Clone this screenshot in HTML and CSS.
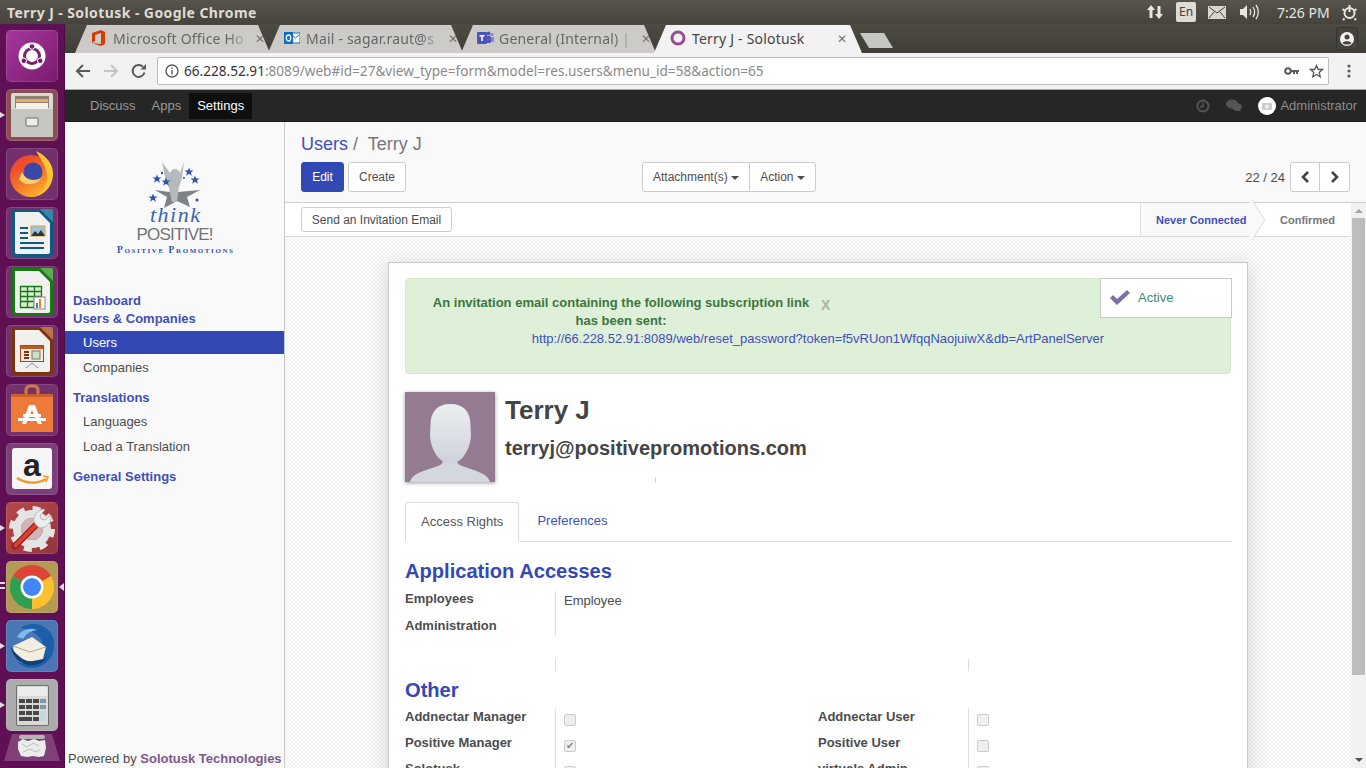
FILE: index.html
```html
<!DOCTYPE html>
<html>
<head>
    <title>Terry J - Solotusk</title>
    <link rel="stylesheet" href="styles.css">
</head>
<body>
    <div class="topbar">
        <span class="win-title">Terry J - Solotusk - Google Chrome</span>
        <div class="tray">
            <svg class="tray-arrows" width="18" height="16" viewBox="0 0 18 16"><path d="M5 1l4 5H6.500v8h-3V6H1zM13 15l-4-5h2.500V2h3v8H17z" fill="#e8e6e0"/></svg>
            <span class="tray-lang">En</span>
            <svg class="tray-mail" width="18" height="13" viewBox="0 0 18 13"><rect x="0.500" y="0.500" width="17" height="12" fill="#d8d6d0" stroke="#d8d6d0"/><path d="M1 1l8 6 8-6M1 12l5.500-6.500M17 12l-5.500-6.500" fill="none" stroke="#45433c"/></svg>
            <svg class="tray-sound" width="22" height="16" viewBox="0 0 22 16"><path d="M1 5h3l4-4v14l-4-4H1z" fill="#e8e6e0"/><path d="M11 5c1 2 1 4 0 6M14 3c2 3 2 7 0 10M17 1c3 4 3 10 0 14" fill="none" stroke="#e8e6e0" stroke-width="1.300"/></svg>
            <span class="tray-clock">7:26 PM</span>
            <svg class="tray-gear" width="17" height="17" viewBox="0 0 17 17"><circle cx="8.500" cy="9" r="5" fill="none" stroke="#e8e6e0" stroke-width="2"/><path d="M8.500 1v7M1.500 5l2 1.500M15.500 5l-2 1.500M3.500 14.500l-1.500 1.500M13.500 14.500l1.500 1.500" stroke="#e8e6e0" stroke-width="2"/></svg>
        </div>
    </div>

    <div class="desktop">
        <div class="launcher">
            <div class="tile tile-ubuntu">
                <svg width="52" height="52" viewBox="0 0 52 52"><circle cx="26" cy="26" r="13.500" fill="#fff"/><circle cx="26" cy="26" r="7.500" fill="none" stroke="#7a1e70" stroke-width="3"/><circle cx="26" cy="16.500" r="2.800" fill="#7a1e70" stroke="#fff"/><circle cx="17.800" cy="30.800" r="2.800" fill="#7a1e70" stroke="#fff"/><circle cx="34.200" cy="30.800" r="2.800" fill="#7a1e70" stroke="#fff"/></svg>
            </div>
            <div class="tile tile-files has-pip">
                <svg width="52" height="52" viewBox="0 0 52 52"><rect x="5" y="4" width="42" height="44" rx="2" fill="#d9d9d6"/><rect x="9" y="7" width="34" height="12" fill="#8c7f74"/><rect x="10" y="10" width="32" height="3" fill="#f0a860"/><rect x="10" y="14" width="32" height="6" fill="#f4f0e8"/><rect x="5" y="20" width="42" height="28" fill="#c6c6c3"/><rect x="20" y="29" width="12" height="8" rx="1" fill="#eee" stroke="#666"/></svg>
            </div>
            <div class="tile tile-app">
                <svg width="52" height="52" viewBox="0 0 52 52"><defs><linearGradient id="foxBody" x1="0" y1="0" x2="0.600" y2="1"><stop offset="0" stop-color="#e8352a"/><stop offset="0.600" stop-color="#f4702a"/><stop offset="1" stop-color="#fbb02d"/></linearGradient></defs><circle cx="25" cy="28" r="21" fill="url(#foxBody)"/><path d="M30 3c11 5 18 14 17 25-1 10-8 18-17 20 8-5 12-12 11-21-1-9-6-15-11-24z" fill="#fcc42f"/><circle cx="27" cy="24" r="9.500" fill="#3a47a8"/><path d="M16 24c3 8 12 10 19 6-4 7-17 9-22 1z" fill="#fbd06a"/><path d="M8 17c4-3 10-4 15-1-5 1-6 5-4 8-5 0-9-2-11-7z" fill="#ee4f2a"/></svg>
            </div>
            <div class="tile tile-app">
                <svg width="52" height="52" viewBox="0 0 52 52"><path d="M6 2h28l13 13v31a4 4 0 0 1-4 4H10a4 4 0 0 1-4-4z" fill="#0f5a85"/><path d="M9 5h24l11 11v29a2 2 0 0 1-2 2H11a2 2 0 0 1-2-2z" fill="#f0f0ee"/><path d="M34 2h11a2 2 0 0 1 2 2v11z" fill="#3d84ad"/><path d="M14 20h8v2h-8zM14 25h8v2h-8zM14 30h8v2h-8zM14 35h24v2H14zM14 40h24v2H14z" fill="#0f5a85"/><rect x="25" y="19" width="14" height="10" fill="#9cc3de" stroke="#d9a441"/><path d="M25 29l4-5 3 3 3-4 4 6z" fill="#333"/></svg>
            </div>
            <div class="tile tile-app">
                <svg width="52" height="52" viewBox="0 0 52 52"><path d="M6 2h28l13 13v31a4 4 0 0 1-4 4H10a4 4 0 0 1-4-4z" fill="#157a12"/><path d="M9 5h24l11 11v29a2 2 0 0 1-2 2H11a2 2 0 0 1-2-2z" fill="#f0f0ee"/><path d="M34 2h11a2 2 0 0 1 2 2v11z" fill="#57b04a"/><path d="M14.500 20.500h21v21h-21zM14.500 25.500h21M14.500 30.500h21M14.500 35.500h21M21.500 20.500v21M28.500 20.500v21" fill="#d8edd0" stroke="#157a12" stroke-width="1.300"/><rect x="28" y="31" width="11" height="12" fill="#fff" stroke="#888"/><path d="M30 37h2v5h-2z" fill="#3d84ad"/><path d="M33 33h2v9h-2z" fill="#e8842a"/></svg>
            </div>
            <div class="tile tile-app">
                <svg width="52" height="52" viewBox="0 0 52 52"><path d="M6 2h28l13 13v31a4 4 0 0 1-4 4H10a4 4 0 0 1-4-4z" fill="#7a3510"/><path d="M9 5h24l11 11v29a2 2 0 0 1-2 2H11a2 2 0 0 1-2-2z" fill="#f0f0ee"/><path d="M34 2h11a2 2 0 0 1 2 2v11z" fill="#b8764a"/><rect x="14.500" y="20.500" width="23" height="16" fill="#f6e9dd" stroke="#a8481a"/><rect x="15" y="21" width="22" height="3" fill="#c05a20"/><path d="M18 26h5v2h-5zM18 29h5v2h-5zM18 32h5v2h-5z" fill="#7a3510"/><rect x="26" y="26" width="8" height="8" fill="#cfe0c8" stroke="#777"/><path d="M20 43l6-5 6 5" fill="none" stroke="#888"/></svg>
            </div>
            <div class="tile tile-app">
                <svg width="52" height="52" viewBox="0 0 52 52"><path d="M20 12V6a4 4 0 0 1 4-4h4a4 4 0 0 1 4 4v6" fill="none" stroke="#d97a44" stroke-width="3"/><rect x="5" y="10" width="42" height="38" fill="#ed7a38"/><rect x="5" y="10" width="42" height="3" fill="#c8622a"/><path d="M23 21h6l7 19h-4l-6-14-6 14h-4z" fill="#fff"/><rect x="17" y="30" width="18" height="3" fill="#fff"/><rect x="12" y="34" width="28" height="3" fill="#fff"/></svg>
            </div>
            <div class="tile tile-amazon">
                <svg width="52" height="52" viewBox="0 0 52 52"><rect x="6" y="5" width="40" height="41" rx="3" fill="#f6f6f6"/><text class="amazon-a" x="26" y="33" text-anchor="middle">a</text><path d="M11 35c9 6 21 6 29 1" fill="none" stroke="#f39a1e" stroke-width="2.500"/><path d="M37 33l5 1-2 5" fill="none" stroke="#f39a1e" stroke-width="1.500"/></svg>
            </div>
            <div class="tile tile-settings has-pip">
                <svg width="52" height="52" viewBox="0 0 52 52"><circle cx="26" cy="27" r="15" fill="none" stroke="#e4e4e4" stroke-width="8"/><circle cx="26" cy="27" r="20.500" fill="none" stroke="#e4e4e4" stroke-width="5" stroke-dasharray="8 8.100"/><circle cx="26" cy="27" r="11" fill="#d0b5b5"/><path d="M9 44l24-24" stroke="#8e1f1a" stroke-width="6.500" stroke-linecap="round"/><path d="M9.500 43.500l23-23" stroke="#d8402f" stroke-width="4" stroke-linecap="round"/><path d="M31 24l-3-4c-1-6 3-12 10-13l1 1-5 5 1 4 4 1 6-5c1 7-4 13-11 13z" fill="#ececec" stroke="#9a9a9a" stroke-width="0.600"/></svg>
            </div>
            <div class="tile tile-chrome has-pip two-pips active-app">
                <svg width="52" height="52" viewBox="0 0 52 52"><path d="M26 26L6.950 15A22 22 0 0 1 45.050 15Z" fill="#db4437"/><path d="M26 26L45.050 15A22 22 0 0 1 26 48Z" fill="#fbc02d"/><path d="M26 26L26 48A22 22 0 0 1 6.950 15Z" fill="#2f9e4f"/><circle cx="26" cy="26" r="11.500" fill="#fff"/><circle cx="26" cy="26" r="9" fill="#4285f4"/></svg>
            </div>
            <div class="tile tile-bird has-pip">
                <svg width="52" height="52" viewBox="0 0 52 52"><path d="M14 8c12-8 28-4 33 9 4 12-2 26-15 30-8 2-16 0-21-5 10 3 24-2 26-14 1-9-8-18-23-20z" fill="#1d5ea8"/><path d="M11 17c4-7 13-10 20-7-7 1-11 4-14 9z" fill="#7dbcec"/><path d="M7 26l19-9 14 10-3 12-21 4-8-8z" fill="#f3eee0"/><path d="M7 26l17 6 16-5" fill="none" stroke="#b0a890"/><path d="M5 27c1 9 8 16 17 18 9 1 15-2 19-8-8 6-22 6-28-1-4-3-6-6-8-9z" fill="#123f7a"/></svg>
            </div>
            <div class="tile tile-calc has-pip">
                <svg width="52" height="52" viewBox="0 0 52 52"><rect x="10" y="6" width="33" height="41" rx="2" fill="#6e6e6e"/><rect x="11" y="7" width="31" height="39" rx="1" fill="#d9d9d9"/><rect x="12" y="8" width="29" height="9" fill="#ececec"/><g fill="#484848"><rect x="13" y="20" width="6" height="4"/><rect x="20" y="20" width="6" height="4"/><rect x="27" y="20" width="6" height="4"/><rect x="13" y="26" width="6" height="4"/><rect x="20" y="26" width="6" height="4"/><rect x="27" y="26" width="6" height="4"/><rect x="13" y="32" width="6" height="4"/><rect x="20" y="32" width="6" height="4"/><rect x="27" y="32" width="6" height="4"/><rect x="13" y="38" width="13" height="4"/><rect x="27" y="38" width="6" height="4"/></g><rect x="34" y="20" width="6" height="4" fill="#7c97a8"/><rect x="34" y="26" width="6" height="4" fill="#7c97a8"/><rect x="34" y="32" width="6" height="10" fill="#c4d6e0"/></svg>
            </div>
            <div class="tile-trash">
                <svg width="58" height="30" viewBox="0 0 58 30"><path d="M9 1h40l8 27H1z" fill="#81407a"/><rect x="16" y="2" width="26" height="4" rx="2" fill="#b5b5b5"/><path d="M15 9l5-3 5 2 6-2 5 2 6-1 1 8-2 8-5 1-6-1-6 1-6-1-3-7z" fill="#ececec"/><path d="M19 11l5 3 6-4 6 3M20 19l7-3 6 3 4-2" fill="none" stroke="#bbb"/></svg>
            </div>
        </div>

        <div class="browser">
            <div class="tabstrip">
                <div class="tab">
                    <svg class="favicon" width="16" height="16" viewBox="0 0 16 16"><path d="M1 3l9-3 4 2v12l-4 2-9-3 9 1V3L4 5v6l-3 2z" fill="#d83b01"/></svg>
                    <span class="tab-name">Microsoft Office Ho</span>
                    <span class="tab-x">✕</span>
                </div>
                <div class="tab">
                    <svg class="favicon" width="16" height="16" viewBox="0 0 16 16"><rect x="7" y="3" width="9" height="10" fill="#fff" stroke="#0f6fc6"/><path d="M8 5l3.500 3L15 5" fill="none" stroke="#0f6fc6"/><rect y="2" width="9" height="12" fill="#0f6fc6"/><ellipse cx="4.500" cy="8" rx="2.200" ry="3" fill="none" stroke="#fff" stroke-width="1.300"/></svg>
                    <span class="tab-name">Mail - sagar.raut@s</span>
                    <span class="tab-x">✕</span>
                </div>
                <div class="tab">
                    <svg class="favicon" width="17" height="16" viewBox="0 0 17 16"><circle cx="11.500" cy="3.500" r="2" fill="#5558af"/><circle cx="15" cy="4.500" r="1.500" fill="#7b83eb"/><rect x="9" y="6" width="5" height="7" rx="1" fill="#5558af"/><rect x="14" y="7" width="3" height="5" rx="1" fill="#7b83eb"/><rect y="2" width="10" height="12" rx="1" fill="#4b53bc"/><path d="M2.500 5h5v1.500H5.800V11H4.200V6.500H2.500z" fill="#fff"/></svg>
                    <span class="tab-name tab-name-teams">General (Internal) | I</span>
                    <span class="tab-x">✕</span>
                </div>
                <div class="tab tab-active">
                    <svg class="favicon" width="16" height="16" viewBox="0 0 16 16"><circle cx="8" cy="8" r="6" fill="none" stroke="#964c8d" stroke-width="3"/></svg>
                    <span class="tab-name">Terry J - Solotusk</span>
                    <span class="tab-x">✕</span>
                </div>
                <div class="tab-new"></div>
                <div class="profile-btn">
                    <svg width="16" height="16" viewBox="0 0 16 16"><circle cx="8" cy="8" r="7" fill="#f2f2f2"/><circle cx="8" cy="6" r="2.500" fill="#45433c"/><path d="M3.500 12c1-2.500 8-2.500 9 0-2 2-7 2-9 0z" fill="#45433c"/></svg>
                </div>
            </div>

            <div class="toolbar">
                <svg class="tool-back" width="16" height="16" viewBox="0 0 16 16"><path d="M15 8H2M8 2L2 8l6 6" fill="none" stroke="#5a5a5a" stroke-width="2"/></svg>
                <svg class="tool-forward" width="16" height="16" viewBox="0 0 16 16"><path d="M1 8h13M8 2l6 6-6 6" fill="none" stroke="#c4c4c4" stroke-width="2"/></svg>
                <svg class="tool-reload" width="16" height="16" viewBox="0 0 16 16"><path d="M13.500 9.500A6 6 0 1 1 12 3.700" fill="none" stroke="#5a5a5a" stroke-width="2"/><path d="M9.500 6.500H15V1z" fill="#5a5a5a"/></svg>
                <div class="omnibox">
                    <svg class="omni-info" width="14" height="14" viewBox="0 0 14 14"><circle cx="7" cy="7" r="6" fill="none" stroke="#5a5a5a" stroke-width="1.400"/><path d="M6.300 6h1.400v4.500H6.300zM6.300 3.500h1.400V5H6.300z" fill="#5a5a5a"/></svg>
                    <span class="url"><b class="url-host">66.228.52.91</b>:8089/web#id=27&amp;view_type=form&amp;model=res.users&amp;menu_id=58&amp;action=65</span>
                    <svg class="omni-key" width="15" height="9" viewBox="0 0 15 9"><circle cx="4" cy="4" r="2.800" fill="none" stroke="#5a5a5a" stroke-width="2"/><path d="M7 3h8v2h-1v2h-2V5h-1v2H9V5H7z" fill="#5a5a5a"/></svg>
                    <svg class="omni-star" width="15" height="15" viewBox="0 0 15 15"><path d="M7.500 1.500l1.800 4h4.200l-3.300 2.900 1.100 4.400-3.800-2.400-3.800 2.400 1.100-4.400L1.500 5.500h4.200z" fill="none" stroke="#5a5a5a" stroke-width="1.300"/></svg>
                </div>
                <svg class="tool-menu" width="4" height="14" viewBox="0 0 4 14"><circle cx="2" cy="2" r="1.600" fill="#5a5a5a"/><circle cx="2" cy="7" r="1.600" fill="#5a5a5a"/><circle cx="2" cy="12" r="1.600" fill="#5a5a5a"/></svg>
            </div>

            <div class="o-nav">
                <a class="o-nav-item">Discuss</a>
                <a class="o-nav-item">Apps</a>
                <a class="o-nav-item o-nav-active">Settings</a>
                <div class="o-nav-right">
                    <svg class="o-clock" width="14" height="14" viewBox="0 0 14 14"><circle cx="7" cy="7" r="5.500" fill="none" stroke="#555" stroke-width="2"/><path d="M7 3.500V7.500H4" fill="none" stroke="#555" stroke-width="1.500"/></svg>
                    <svg class="o-chat" width="16" height="13" viewBox="0 0 16 13"><ellipse cx="6" cy="5" rx="6" ry="4.500" fill="#555"/><ellipse cx="11" cy="8" rx="5" ry="4" fill="#555"/><path d="M13 10l2 3-4-2z" fill="#555"/></svg>
                    <span class="o-avatar"><svg width="10" height="8" viewBox="0 0 10 8"><rect y="1" width="10" height="7" rx="1" fill="#ccc"/><circle cx="5" cy="4.500" r="2" fill="#eee"/></svg></span>
                    <span class="o-user">Administrator</span>
                </div>
            </div>

            <div class="o-main">
                <div class="sidebar">
                    <div class="logo">
                        <svg width="120" height="98" viewBox="0 0 120 98">
                            <defs><path id="logoStar" d="M0-4.500l1.200 3h3.300l-2.600 2 1 3.200L0 1.800l-2.900 1.900 1-3.200-2.600-2h3.300z" fill="#3153a8"/></defs>
                            <path d="M40 31l14 2 4-4 5 4 22-2-13 7 3 10-13-6-13 7 3-11z" fill="#7d8287"/>
                            <path d="M47 3l8 11c1-2 2-4 5-4s4 2 5 4l4-11-2 16-3 9-2 15h-5l-3-14-4-11z" fill="#b6babd"/>
                            <use href="#logoStar" x="42" y="20"/>
                            <use href="#logoStar" x="51" y="23"/>
                            <use href="#logoStar" x="74" y="13"/>
                            <use href="#logoStar" x="80" y="21"/>
                            <use href="#logoStar" x="38" y="39"/>
                            <circle cx="47" cy="14" r="1.200" fill="#3153a8"/>
                            <circle cx="69" cy="19" r="1" fill="#3153a8"/>
                            <circle cx="82" cy="41" r="1.600" fill="#3153a8"/>
                            <text class="logo-think" x="60" y="63" text-anchor="middle" textLength="50">think</text>
                            <text class="logo-positive" x="60" y="81" text-anchor="middle" textLength="77">POSITIVE!</text>
                            <text class="logo-promo" x="60" y="94" text-anchor="middle" textLength="116">Positive Promotions</text>
                        </svg>
                    </div>
                    <div class="menu">
                        <a class="menu-head">Dashboard</a>
                        <a class="menu-head menu-open">Users &amp; Companies</a>
                        <a class="menu-item menu-active">Users</a>
                        <a class="menu-item">Companies</a>
                        <a class="menu-head menu-gap">Translations</a>
                        <a class="menu-item">Languages</a>
                        <a class="menu-item">Load a Translation</a>
                        <a class="menu-head menu-gap">General Settings</a>
                    </div>
                    <div class="powered">Powered by <b>Solotusk Technologies</b></div>
                </div>

                <div class="content">
                    <div class="control-panel">
                        <div class="crumbs"><a class="crumb-link">Users</a> /&nbsp; <span class="crumb-cur">Terry J</span></div>
                        <div class="cp-buttons">
                            <div class="cp-left">
                                <button class="btn btn-primary btn-edit">Edit</button>
                                <button class="btn btn-create">Create</button>
                            </div>
                            <div class="cp-mid">
                                <button class="btn btn-group-l">Attachment(s) <i class="caret"></i></button>
                                <button class="btn btn-group-r">Action <i class="caret"></i></button>
                            </div>
                            <div class="cp-right">
                                <span class="pager">22 / 24</span>
                                <button class="btn btn-group-l btn-page"><svg width="10" height="12" viewBox="0 0 10 12"><path d="M8 1L3 6l5 5" fill="none" stroke="#444" stroke-width="2.600"/></svg></button>
                                <button class="btn btn-group-r btn-page"><svg width="10" height="12" viewBox="0 0 10 12"><path d="M2 1l5 5-5 5" fill="none" stroke="#444" stroke-width="2.600"/></svg></button>
                            </div>
                        </div>
                    </div>

                    <div class="form-wrap">
                        <div class="form-col">
                            <div class="statusbar">
                                <button class="btn btn-invite">Send an Invitation Email</button>
                                <div class="stages">
                                    <span class="stage stage-on"><span>Never Connected</span></span>
                                    <span class="stage">Confirmed</span>
                                </div>
                            </div>
                            <div class="sheet-bg">
                                <div class="sheet">
                                    <div class="alert">
                                        <div class="alert-top">
                                            <p class="alert-msg">An invitation email containing the following subscription link has been sent:</p>
                                            <span class="alert-x">X</span>
                                        </div>
                                        <a class="alert-link">http://66.228.52.91:8089/web/reset_password?token=f5vRUon1WfqqNaojuiwX&amp;db=ArtPanelServer</a>
                                    </div>
                                    <div class="active-btn">
                                        <svg width="22" height="17" viewBox="0 0 22 17"><path d="M1 9l3-3 4 4L18 1l3 3L8 16z" fill="#7c6fa8"/></svg>
                                        <span>Active</span>
                                    </div>

                                    <div class="user-head">
                                        <div class="avatar">
                                            <svg width="90" height="90" viewBox="0 0 90 90">
                                                <defs>
                                                    <linearGradient id="headFill" x1="0" y1="0" x2="0" y2="1"><stop offset="0" stop-color="#eceef1"/><stop offset="1" stop-color="#ced1d9"/></linearGradient>
                                                </defs>
                                                <rect width="90" height="90" fill="#937b92"/>
                                                <path d="M5 90C7 81 22 78 33 74c5-2 5-4 5-8h14c0 4 0 6 5 8 11 4 26 7 28 16z" fill="#d4d7de"/>
                                                <path d="M45.500 12C32 12 25.500 20 25.500 33c0 5-1 9 0 15 2 13 11 24 20 24s18-11 20-24c1-6 0-10 0-15 0-13-6.500-21-20-21z" fill="url(#headFill)"/>
                                            </svg>
                                        </div>
                                        <div class="user-text">
                                            <h1 class="user-name">Terry J</h1>
                                            <h2 class="user-mail">terryj@positivepromotions.com</h2>
                                            <i class="tick"></i>
                                        </div>
                                    </div>

                                    <div class="tabs">
                                        <a class="form-tab form-tab-on">Access Rights</a>
                                        <a class="form-tab">Preferences</a>
                                    </div>

                                    <h3 class="group-title">Application Accesses</h3>
                                    <div class="grid-access">
                                        <div class="g-label">Employees</div>
                                        <div class="g-val g-text">Employee</div>
                                        <div class="g-label">Administration</div>
                                        <div class="g-val"></div>
                                    </div>
                                    <div class="grid-other grid-stub">
                                        <div></div><div class="g-val"></div><div></div><div class="g-val"></div>
                                    </div>

                                    <h3 class="group-title group-other">Other</h3>
                                    <div class="grid-other">
                                        <div class="g-label">Addnectar Manager</div>
                                        <div class="g-val"><i class="check"></i></div>
                                        <div class="g-label">Addnectar User</div>
                                        <div class="g-val"><i class="check"></i></div>
                                        <div class="g-label">Positive Manager</div>
                                        <div class="g-val"><i class="check">✔</i></div>
                                        <div class="g-label">Positive User</div>
                                        <div class="g-val"><i class="check"></i></div>
                                        <div class="g-label">Solotusk</div>
                                        <div class="g-val"><i class="check"></i></div>
                                        <div class="g-label">virtuals Admin</div>
                                        <div class="g-val"><i class="check"></i></div>
                                    </div>
                                </div>
                            </div>
                        </div>
                        <div class="scrollbar">
                            <i class="sb-up"></i>
                            <div class="sb-track"><div class="sb-thumb"></div></div>
                            <i class="sb-down"></i>
                        </div>
                    </div>
                </div>
            </div>
        </div>
    </div>
</body>
</html>
```

FILE: styles.css
```css
* {
    box-sizing: border-box;
}
html, body {
    height: 100%;
}
body {
    margin: 0;
    height: 768px;
    overflow: hidden;
    display: flex;
    flex-direction: column;
    font-family: "Liberation Sans", Arial, sans-serif;
    font-size: 13px;
    color: #4c4c4c;
}
a {
    cursor: pointer;
}
button {
    font-family: inherit;
}

/* ubuntu top panel */
.topbar {
    height: 24px;
    flex: none;
    display: flex;
    align-items: center;
    justify-content: space-between;
    background: linear-gradient(#56544b, #45433c);
    padding: 0 8px 0 7px;
}
.win-title {
    font-family: "Noto Sans", sans-serif;
    font-weight: 700;
    font-size: 14px;
    letter-spacing: 0.42px;
    color: #dfdbd2;
}
.tray {
    display: flex;
    align-items: center;
    color: #e8e6e0;
}
.tray-lang {
    width: 20px;
    height: 20px;
    margin-left: 12px;
    background: #dfdcd5;
    border-radius: 2px;
    color: #45433c;
    font-family: "Noto Sans", sans-serif;
    font-size: 12px;
    line-height: 20px;
    text-align: center;
}
.tray-mail {
    margin-left: 12px;
}
.tray-sound {
    margin-left: 13px;
}
.tray-clock {
    margin-left: 16px;
    font-family: "Noto Sans", sans-serif;
    font-size: 14px;
    width: 52px;
    white-space: nowrap;
}
.tray-gear {
    margin-left: 12px;
}

.desktop {
    flex: 1;
    display: flex;
    min-height: 0;
}

/* launcher */
.launcher {
    width: 65px;
    flex: none;
    background: #5f0f53;
    display: flex;
    flex-direction: column;
    align-items: center;
    gap: 7px;
    padding-top: 6px;
    border-right: 1px solid #4a0c41;
}
.tile {
    width: 52px;
    height: 52px;
    flex: none;
    border-radius: 5px;
    position: relative;
    background: #72306c;
    box-shadow: inset 0 0 0 1px rgba(255, 255, 255, 0.12);
}
.tile svg {
    display: block;
}
.tile-ubuntu {
    background: linear-gradient(135deg, #a5389b, #7a1a70);
}
.tile-files {
    background: #8a4f55;
}
.tile-amazon {
    background: #7d3f79;
}
.tile-settings {
    background: linear-gradient(135deg, #b8474a, #96343c);
}
.tile-chrome {
    background: #b39a55;
}
.tile-bird {
    background: #4a76b4;
}
.tile-calc {
    background: #acacac;
}
.tile-trash {
    height: 30px;
    margin-top: -5px;
}
.tile-trash svg {
    display: block;
}
.has-pip::before {
    content: "";
    position: absolute;
    left: -6px;
    top: 23px;
    border-left: 5px solid #ddd;
    border-top: 3.5px solid transparent;
    border-bottom: 3.5px solid transparent;
}
.two-pips::before {
    top: 21px;
    height: 0;
    box-shadow: 0 5px 0 #ddd;
    border: 0;
    width: 5px;
    border-top: 2px solid #ddd;
}
.active-app::after {
    content: "";
    position: absolute;
    right: -6px;
    top: 22px;
    border-right: 5px solid #ddd;
    border-top: 4px solid transparent;
    border-bottom: 4px solid transparent;
}
.amazon-a {
    font-family: "Liberation Sans", sans-serif;
    font-weight: 700;
    font-size: 32px;
    fill: #222;
}

.browser {
    flex: 1;
    min-width: 0;
    display: flex;
    flex-direction: column;
}

/* chrome tabs */
.tabstrip {
    height: 29px;
    flex: none;
    display: flex;
    align-items: flex-end;
    background: linear-gradient(#4d4b43, #3f3e37);
    padding-left: 10px;
    position: relative;
}
.tab {
    width: 195px;
    height: 28px;
    margin-right: -2px;
    padding: 0 5px 2px 16px;
    display: flex;
    align-items: center;
    background: #cdcbc8;
    clip-path: polygon(12px 0, calc(100% - 12px) 0, 100% 100%, 0 100%);
    font-family: "Noto Sans", sans-serif;
    font-size: 14px;
    color: #666;
}
.tab-active {
    width: 208px;
    padding-right: 15px;
    background: #f2f2f2;
    color: #444;
    z-index: 1;
}
.favicon {
    flex: none;
    margin-right: 6px;
}
.tab-name {
    flex: 1;
    min-width: 0;
    white-space: nowrap;
    letter-spacing: 0.2px;
    -webkit-mask-image: linear-gradient(90deg, #000 85%, transparent);
    mask-image: linear-gradient(90deg, #000 85%, transparent);
}
.tab-name-teams {
    margin-left: -1px;
}
.tab-active .tab-name {
    -webkit-mask-image: none;
    mask-image: none;
}
.tab-x {
    flex: none;
    margin-left: 6px;
    font-size: 12px;
    color: #777;
}
.tab-new {
    width: 33px;
    height: 15px;
    margin: 0 0 5px 0;
    background: #c8c6c3;
    clip-path: polygon(0 0, 24px 0, 100% 100%, 9px 100%);
}
.profile-btn {
    position: absolute;
    right: 8px;
    top: 3px;
    width: 22px;
    height: 23px;
    border: 1px solid #35342e;
    border-radius: 3px;
    background: #45433c;
    display: flex;
    align-items: center;
    justify-content: center;
}

/* chrome toolbar */
.toolbar {
    height: 37px;
    flex: none;
    display: flex;
    align-items: center;
    background: #f2f2f2;
    padding: 0 0 0 10px;
    border-bottom: 1px solid #a8a8a8;
}
.tool-forward {
    margin-left: 12px;
}
.tool-reload {
    margin-left: 12px;
}
.omnibox {
    width: 1172px;
    height: 28px;
    margin-left: 10px;
    display: flex;
    align-items: center;
    background: #fff;
    border: 1px solid #bdbdbd;
    border-radius: 2px;
    padding: 0 4px 0 7px;
}
.url {
    flex: 1;
    margin-left: 5px;
    padding-bottom: 2px;
    font-family: "Noto Sans", sans-serif;
    font-size: 13.6px;
    color: #8a8a8a;
    white-space: nowrap;
}
.url-host {
    font-weight: 400;
    color: #333;
}
.omni-key {
    margin-right: 10px;
}
.tool-menu {
    margin-left: 18px;
}

/* odoo navbar */
.o-nav {
    height: 32px;
    flex: none;
    display: flex;
    align-items: center;
    background: #262626;
    padding-left: 17px;
    border-bottom: 1px solid #1a1a1a;
}
.o-nav-item {
    height: 26px;
    line-height: 26px;
    padding: 0 8px;
    color: #999;
}
.o-nav-active {
    color: #fff;
    background: #0f0f0f;
}
.o-nav-right {
    margin-left: auto;
    display: flex;
    align-items: center;
    padding-right: 9px;
    color: #8c8c8c;
}
.o-chat {
    margin-left: 16px;
}
.o-avatar {
    width: 18px;
    height: 18px;
    margin-left: 16px;
    border-radius: 50%;
    background: #fff;
    display: flex;
    align-items: center;
    justify-content: center;
}
.o-user {
    margin-left: 4px;
}

.o-main {
    flex: 1;
    min-height: 0;
    display: flex;
}

/* left menu */
.sidebar {
    width: 220px;
    flex: none;
    display: flex;
    flex-direction: column;
    background: #f9f9f9;
    border-right: 1px solid #c9c9c9;
}
.logo {
    height: 170px;
    padding: 37px 0 0 50px;
}
.logo svg {
    display: block;
}
.logo-think {
    font-family: "Liberation Serif", serif;
    font-style: italic;
    font-size: 22px;
    fill: #3b63b0;
}
.logo-positive {
    font-family: "Liberation Sans", sans-serif;
    font-size: 17px;
    fill: #6f7377;
}
.logo-promo {
    font-family: "Liberation Serif", serif;
    font-variant: small-caps;
    font-weight: 700;
    font-size: 9.500px;
    fill: #3153a8;
}
.menu {
    flex: 1;
    display: flex;
    flex-direction: column;
}
.menu-head {
    display: block;
    height: 18px;
    line-height: 18px;
    padding-left: 8px;
    font-weight: 700;
    color: #3f4fb8;
}
.menu-open {
    margin-bottom: 3px;
}
.menu-gap {
    margin-top: 8px;
    margin-bottom: 3px;
}
.menu-item {
    display: block;
    height: 23px;
    line-height: 23px;
    padding-left: 18px;
    margin-bottom: 2px;
    color: #4c4c4c;
}
.menu-active {
    color: #fff;
    background: #3249b5;
}
.powered {
    padding: 0 0 0 3px;
    height: 18px;
    line-height: 18px;
    white-space: nowrap;
}
.powered b {
    color: #7c5a8a;
}

/* control panel */
.content {
    flex: 1;
    min-width: 0;
    display: flex;
    flex-direction: column;
}
.control-panel {
    height: 81px;
    flex: none;
    background: #f9f9f9;
    border-bottom: 1px solid #cfcfcf;
    padding: 10px 16px 0 16px;
}
.crumbs {
    height: 24px;
    line-height: 24px;
    font-size: 18px;
    color: #777;
}
.crumb-link {
    color: #3f4fb8;
}
.cp-buttons {
    margin-top: 6px;
    display: flex;
}
.cp-left {
    display: flex;
    gap: 4px;
}
.cp-mid {
    display: flex;
    margin-left: 236px;
}
.cp-right {
    display: flex;
    align-items: center;
    margin-left: auto;
}
.btn {
    height: 30px;
    padding: 0 10px;
    font-size: 12px;
    color: #4c4c4c;
    background: #fff;
    border: 1px solid #ccc;
    border-radius: 3px;
}
.btn-primary {
    color: #fff;
    background: #3249b5;
    border-color: #3249b5;
}
.btn-edit {
    width: 43px;
    padding: 0;
}
.btn-create {
    width: 58px;
    padding: 0;
}
.btn-group-l {
    border-radius: 3px 0 0 3px;
}
.btn-group-r {
    margin-left: -1px;
    border-radius: 0 3px 3px 0;
}
.cp-mid .btn-group-l {
    width: 108px;
    padding: 0;
}
.cp-mid .btn-group-r {
    width: 67px;
    padding: 0;
}
.caret {
    display: inline-block;
    vertical-align: middle;
    border-top: 4px solid #4c4c4c;
    border-left: 4px solid transparent;
    border-right: 4px solid transparent;
}
.pager {
    margin-right: 5px;
    margin-left: 1px;
}
.btn-page {
    width: 31px;
    padding: 0;
}
.btn-page.btn-group-l {
    width: 30px;
}
.btn-page svg {
    display: block;
    margin: 0 auto;
}

/* form view */
.form-wrap {
    flex: 1;
    min-height: 0;
    display: flex;
}
.form-col {
    flex: 1;
    min-width: 0;
    display: flex;
    flex-direction: column;
}
.statusbar {
    height: 34px;
    flex: none;
    display: flex;
    justify-content: space-between;
    align-items: flex-start;
    background: #fff;
    border-bottom: 1px solid #d9d9d9;
    padding: 4px 4px 0 16px;
}
.btn-invite {
    height: 25px;
    width: 151px;
    padding: 0;
}
.stages {
    display: flex;
    margin-top: -4px;
    height: 33px;
    font-size: 11px;
    font-weight: 700;
}
.stage {
    position: relative;
    line-height: 34px;
    padding: 0 14px 0 24px;
    color: #777;
}
.stage-on {
    width: 116px;
    padding: 0 0 0 15px;
    color: #3f4fb8;
    background: #f9f9f9;
    border-left: 1px solid #e4e4e4;
    white-space: nowrap;
}
.stage-on::after {
    content: "";
    position: absolute;
    right: -8px;
    top: 5px;
    width: 23px;
    height: 23px;
    transform: rotate(45deg) skew(12deg, 12deg);
    background: #f9f9f9;
    border-top: 1px solid #dedede;
    border-right: 1px solid #dedede;
}
.stage-on span {
    position: relative;
    z-index: 1;
}
.sheet-bg {
    flex: 1;
    min-height: 0;
    overflow: hidden;
    padding: 25px 105px 0 103px;
    background: repeating-conic-gradient(#f2f2f2 0 25%, #fcfcfc 0 50%) 0 0 / 4px 4px;
}
.sheet {
    position: relative;
    width: 860px;
    height: 900px;
    padding: 15px 16px 0 16px;
    background: #fff;
    border: 1px solid #c8c8d0;
    box-shadow: 0 4px 20px rgba(0, 0, 0, 0.15);
}
.alert {
    height: 96px;
    padding: 15px 15px 0 15px;
    background: #dff0d8;
    border: 1px solid #d6e9c6;
    border-radius: 4px;
}
.alert-top {
    display: flex;
}
.alert-msg {
    width: 400px;
    margin: 0;
    line-height: 18px;
    font-weight: 700;
    text-align: center;
    color: #3c763d;
}
.alert-x {
    margin: 3px 0 0 0;
    font-size: 14px;
    font-weight: 700;
    color: #a8b5a2;
}
.alert-link {
    display: block;
    line-height: 18px;
    text-align: center;
    color: #3f4fb8;
}
.active-btn {
    position: absolute;
    top: 15px;
    right: 15px;
    width: 132px;
    height: 40px;
    display: flex;
    align-items: center;
    gap: 7px;
    padding: 0 0 2px 8px;
    background: #fff;
    border: 1px solid #c8c8c8;
    color: #3f8a76;
}
.user-head {
    display: flex;
    margin-top: 18px;
}
.avatar {
    width: 90px;
    height: 90px;
    flex: none;
    box-shadow: 0 1px 4px rgba(0, 0, 0, 0.4);
}
.avatar svg {
    display: block;
}
.user-text {
    position: relative;
    flex: 1;
    padding-left: 10px;
}
.user-name {
    margin: 3px 0 0 0;
    font-size: 26px;
    line-height: 30px;
    font-weight: 700;
    color: #444;
}
.user-mail {
    margin: 11px 0 0 0;
    font-size: 20px;
    line-height: 24px;
    font-weight: 700;
    color: #444;
}
.tick {
    position: absolute;
    left: 160px;
    top: 86px;
    width: 1px;
    height: 4px;
    background: #ccc;
}
.tabs {
    display: flex;
    margin-top: 20px;
    height: 40px;
    border-bottom: 1px solid #ddd;
}
.form-tab {
    height: 40px;
    line-height: 38px;
    padding: 0 16px;
    color: #3f4fb8;
    border-radius: 3px 3px 0 0;
    margin-right: 2px;
}
.form-tab-on {
    color: #555;
    background: #fff;
    border: 1px solid #ddd;
    border-bottom-color: #fff;
    padding: 0 15px;
}
.group-title {
    margin: 17px 0 0 0;
    line-height: 24px;
    font-size: 20.100px;
    font-weight: 700;
    color: #3249b5;
}
.group-other {
    margin-top: 7px;
}
.grid-access {
    display: grid;
    grid-template-columns: 150px 1fr;
    grid-template-rows: 27px 18px;
    margin-top: 8px;
}
.grid-other {
    display: grid;
    grid-template-columns: 150px 263px 150px 1fr;
    grid-auto-rows: 26px;
    margin-top: 7px;
}
.grid-stub {
    grid-auto-rows: 12px;
    margin-top: 23px;
}
.grid-stub .g-val {
    height: 12px;
}
.g-label {
    font-weight: 700;
    line-height: 16px;
    white-space: nowrap;
}
.g-val {
    border-left: 1px solid #ddd;
    padding-left: 8px;
}
.g-text {
    padding-top: 2px;
}
.check {
    display: block;
    width: 12px;
    height: 12px;
    margin-top: 5px;
    background: #eee;
    border: 1px solid #ccc;
    border-radius: 2px;
    font-style: normal;
    font-size: 10px;
    line-height: 10px;
    text-align: center;
    color: #888;
}

/* fake scrollbar, the browser one would not sit here */
.scrollbar {
    width: 15px;
    flex: none;
    margin-left: -2px;
    display: flex;
    flex-direction: column;
    align-items: center;
    background: #f1f1f1;
}
.sb-up, .sb-down {
    flex: none;
    width: 0;
    margin: 6px 0;
    border-left: 4px solid transparent;
    border-right: 4px solid transparent;
}
.sb-up {
    border-bottom: 4px solid #a3a3a3;
}
.sb-down {
    border-top: 4px solid #505050;
}
.sb-track {
    flex: 1;
    width: 100%;
}
.sb-thumb {
    height: 457px;
    margin: -1px 1px 0 1px;
    background: #bdbdbd;
}
```
